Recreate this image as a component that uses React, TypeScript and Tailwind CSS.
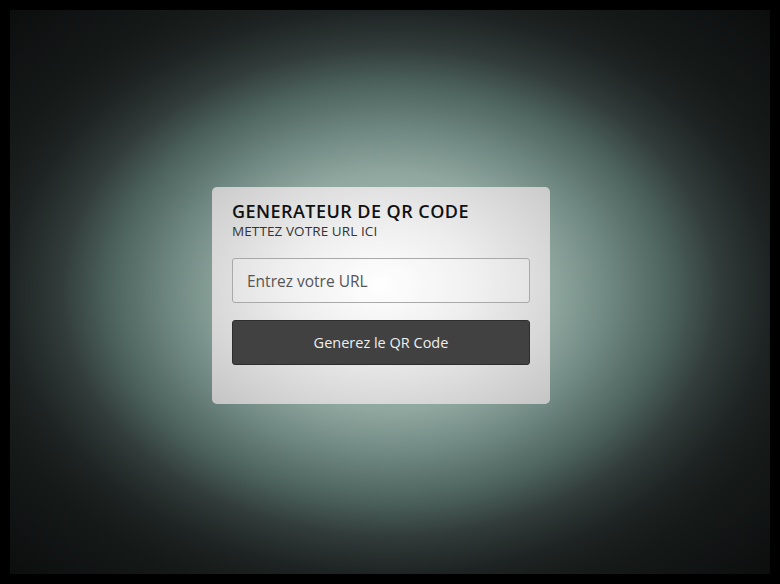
import React, { useState } from 'react';

const App: React.FC = () => {
  const [url, setUrl] = useState('');

  return (
    <div className="w-[780px] h-[584px] bg-black p-[10px]" style={{ fontFamily: '"Open Sans", "Liberation Sans", sans-serif' }}>
      <div className="h-full w-full flex items-center justify-center pr-[18px] pt-[7px] bg-[radial-gradient(ellipse_50%_50%_at_50%_50%,#a4bcb4_0%,#95ada5_35%,#8fa79f_42%,#6e8780_58%,#4a5f5a_75%,#313b39_87%,#1e2423_100%,#151918_113%,#0c0e0e_141%)]">
        {/* Card */}
        <div className="w-[338px] rounded-[5px] px-5 pt-[13px] pb-[39px] bg-[radial-gradient(ellipse_70%_75%_at_50%_45%,#ffffff_0%,#ededed_40%,#c6c6c6_100%)]">
          <h1 className="text-[18px] leading-[22px] font-semibold text-[#111] tracking-[0.45px]">GENERATEUR DE QR CODE</h1>
          <p className="text-[13.5px] leading-[18px] text-[#333] uppercase tracking-[0.1px]">Mettez votre URL ici</p>

          <input
            type="text"
            value={url}
            onChange={(e) => setUrl(e.target.value)}
            placeholder="Entrez votre URL"
            className="mt-[18px] w-full h-[45px] px-[14px] rounded-[3px] border border-[#a9a9a9] bg-white/20 text-[15.5px] text-[#333] placeholder:text-[#555] outline-none"
          />

          <button className="mt-[17px] w-full h-[45px] rounded-[3px] border border-[#2e2e2e] bg-[#414141] text-[14.5px] font-medium text-[#eeeeee]">
            Generez le QR Code
          </button>
        </div>
      </div>
    </div>
  );
};

export default App;
